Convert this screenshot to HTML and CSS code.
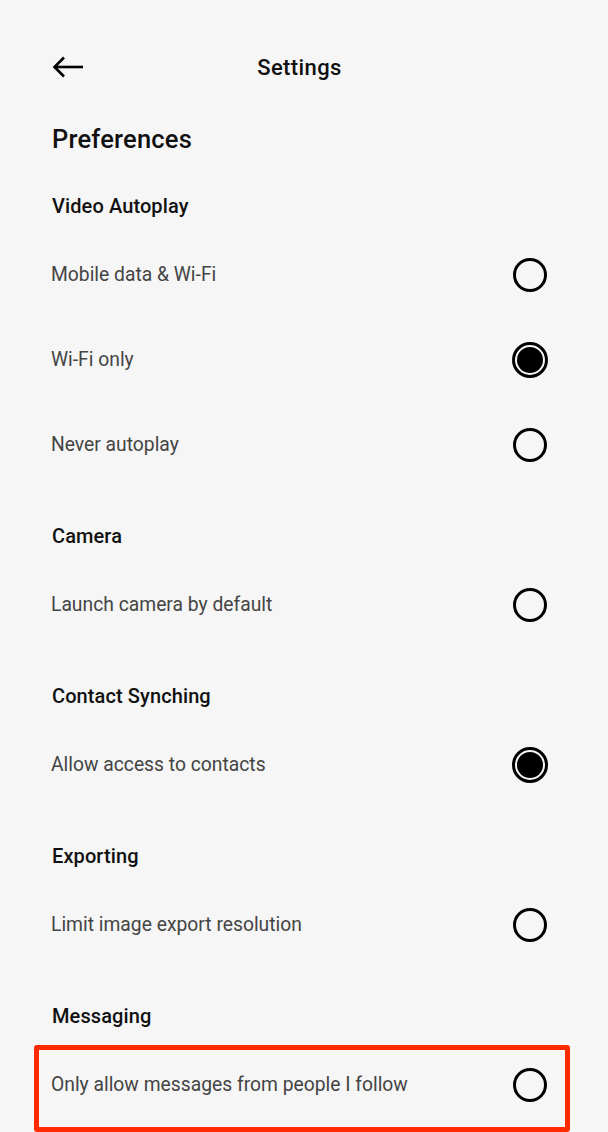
FILE: index.html
```html
<!DOCTYPE html>
<html lang="en">
<head>
<meta charset="utf-8">
<title>Settings</title>
<link rel="stylesheet" href="styles.css">
</head>
<body>
<div class="screen">
  <header class="topbar">
    <button class="back" aria-label="Back">
      <svg width="32" height="22" viewBox="0 0 32 22" fill="none" stroke="#000" stroke-width="2.6" stroke-linecap="butt" stroke-linejoin="miter">
        <path d="M31 11H3"/>
        <path d="M12 1.5L2.5 11L12 20.5"/>
      </svg>
    </button>
    <h1 class="title">Settings</h1>
  </header>

  <h2 class="page-heading">Preferences</h2>

  <section class="group">
    <h3 class="group-title">Video Autoplay</h3>
    <div class="row"><span class="label">Mobile data &amp; Wi-Fi</span><span class="radio"></span></div>
    <div class="row"><span class="label">Wi-Fi only</span><span class="radio on"></span></div>
    <div class="row"><span class="label">Never autoplay</span><span class="radio"></span></div>
  </section>

  <section class="group">
    <h3 class="group-title">Camera</h3>
    <div class="row"><span class="label">Launch camera by default</span><span class="radio"></span></div>
  </section>

  <section class="group">
    <h3 class="group-title">Contact Synching</h3>
    <div class="row"><span class="label">Allow access to contacts</span><span class="radio on"></span></div>
  </section>

  <section class="group">
    <h3 class="group-title">Exporting</h3>
    <div class="row"><span class="label">Limit image export resolution</span><span class="radio"></span></div>
  </section>

  <section class="group">
    <h3 class="group-title">Messaging</h3>
    <div class="row highlight"><span class="label">Only allow messages from people I follow</span><span class="radio"></span></div>
  </section>
</div>
</body>
</html>
```

FILE: styles.css
```css
* { box-sizing: border-box; }
html, body {
  margin: 0;
  padding: 0;
  background: #f6f6f6;
}
body {
  font-family: Roboto, "Liberation Sans", Arial, sans-serif;
  color: #111;
  width: 608px;
  height: 1132px;
  overflow: hidden;
}
.screen {
  padding: 0 60px 0 51px;
}
.topbar {
  position: relative;
  height: 64px;
  margin-top: 35px;
  display: flex;
  align-items: center;
  justify-content: center;
}
.back {
  position: absolute;
  left: 1px;
  top: 21px;
  padding: 0;
  margin: 0;
  border: 0;
  background: none;
  display: block;
  line-height: 0;
}
.title {
  margin: 0 0 0 0;
  font-size: 22px;
  font-weight: 500;
  letter-spacing: 0.4px;
  color: #111;
}
.page-heading {
  margin: 25px 0 0 1px;
  height: 30px;
  line-height: 30px;
  font-size: 25.5px;
  font-weight: 500;
  letter-spacing: 0.2px;
  color: #111;
}
.group {
  margin-top: 24px;
}
.page-heading + .group {
  margin-top: 27px;
}
.group-title {
  margin: 0 0 0 1px;
  height: 51px;
  line-height: 51px;
  font-size: 20px;
  font-weight: 500;
  letter-spacing: 0.1px;
  color: #111;
}
.row {
  height: 85px;
  display: flex;
  align-items: center;
  justify-content: space-between;
}
.label {
  font-size: 19.3px;
  color: #444;
}
.radio {
  width: 34px;
  height: 34px;
  border: 3px solid #000;
  border-radius: 50%;
  flex: none;
  margin-right: 1px;
}
.radio.on {
  width: 36px;
  height: 36px;
  margin-right: 0;
  border-width: 3.5px;
  padding: 2px;
  background: #000;
  background-clip: content-box;
}
.highlight {
  position: relative;
}
.highlight::after {
  content: "";
  position: absolute;
  left: -17px;
  right: -22px;
  top: 3px;
  bottom: -5px;
  border: 5px solid #ff2a00;
  border-radius: 3px;
  pointer-events: none;
}
```
